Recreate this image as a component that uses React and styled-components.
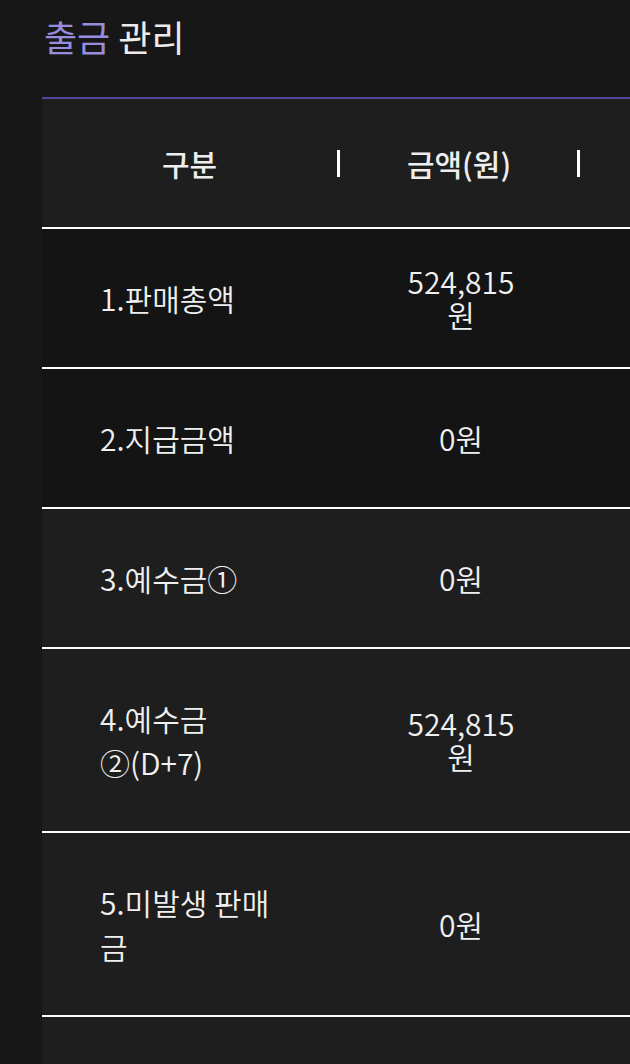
import React from 'react';
import styled, { createGlobalStyle } from 'styled-components';

const GlobalStyle = createGlobalStyle`
  html, body {
    margin: 0;
    padding: 0;
    background: #171717;
    overflow-x: hidden;
  }
  body {
    font-family: "Noto Sans CJK KR", "Noto Sans", sans-serif;
    color: #eeeeee;
  }
`;

const Page = styled.div`
  min-height: 1064px;
  padding-left: 42px;
  background: #171717;
`;

const Title = styled.h1`
  margin: 0;
  padding: 10px 0 35px 2px;
  font-size: 36px;
  line-height: 52px;
  font-weight: 400;
  color: #ececec;

  span {
    color: #978ddc;
  }
`;

const Table = styled.div`
  width: 760px;
  border-top: 2px solid #50489c;
`;

const Row = styled.div`
  display: grid;
  grid-template-columns: 299px 240px 1fr;
  background: ${p => p.$bg};
  border-bottom: 2px solid #ffffff;
`;

const HeadCell = styled.div`
  display: flex;
  align-items: center;
  justify-content: center;
  height: 128px;
  font-size: 30px;
  font-weight: 500;
  color: #eeeeee;
`;

const HeadText = styled.span`
  flex: 1;
  text-align: center;
`;

const Separator = styled.i`
  display: block;
  width: 3px;
  height: 27px;
  margin-right: 1px;
  background: #ffffff;
`;

const Label = styled.div`
  padding: 47px 58px;
  font-size: 30px;
  line-height: 44px;
  font-weight: 350;
  color: #f0f0f0;
`;

const Value = styled.div`
  align-self: center;
  padding: 0 58px;
  font-size: 30px;
  line-height: 33px;
  font-weight: 350;
  text-align: center;
  color: #f0f0f0;
`;

const rows = [
  { label: '1.판매총액', value: '524,815원', bg: '#141414' },
  { label: '2.지급금액', value: '0원', bg: '#141414' },
  { label: '3.예수금①', value: '0원', bg: '#1e1e1e' },
  { label: '4.예수금②(D+7)', value: '524,815원', bg: '#1e1e1e' },
  { label: '5.미발생 판매금', value: '0원', bg: '#1e1e1e' },
  { label: '', value: '', bg: '#1e1e1e' },
];

export default function App() {
  return (
    <Page>
      <GlobalStyle />
      <Title>
        <span>출금</span> 관리
      </Title>
      <Table>
        <Row $bg="#1e1e1e">
          <HeadCell>
            <HeadText>구분</HeadText>
            <Separator />
          </HeadCell>
          <HeadCell>
            <HeadText>금액(원)</HeadText>
            <Separator />
          </HeadCell>
          <HeadCell />
        </Row>
        {rows.map((r, i) => (
          <Row key={i} $bg={r.bg}>
            <Label>{r.label || '\u00a0'}</Label>
            <Value>{r.value}</Value>
            <div />
          </Row>
        ))}
      </Table>
    </Page>
  );
}
